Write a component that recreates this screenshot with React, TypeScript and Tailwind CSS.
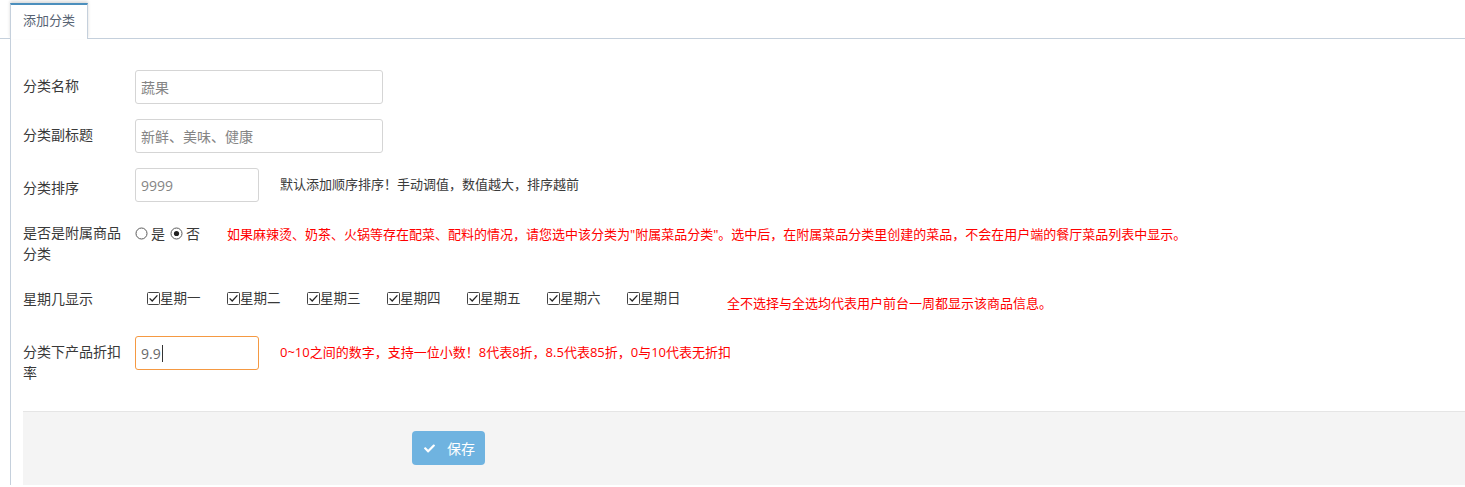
import { FaCheck } from "react-icons/fa";

const weekdays = ["星期一", "星期二", "星期三", "星期四", "星期五", "星期六", "星期日"];

function Label({ children }: { children: React.ReactNode }) {
  return (
    <div className="w-[100px] mr-[12px] shrink-0 pt-[5px] text-[14px] leading-[21px] text-[#393939]">
      {children}
    </div>
  );
}

function Field({ value, width, focused }: { value: string; width: string; focused?: boolean }) {
  return (
    <div
      className={`${width} h-[34px] shrink-0 rounded-[3px] border bg-white pl-[5px] flex items-center text-[14px] ${
        focused ? "border-[#f59942] text-[#696969]" : "border-[#d5d5d5] text-[#858585]"
      }`}
    >
      {value}
      {focused && <span className="ml-px inline-block w-px h-[17px] bg-[#333]" />}
    </div>
  );
}

function Radio({ checked }: { checked?: boolean }) {
  return (
    <svg width="13" height="13" viewBox="0 0 13 13" className="shrink-0">
      <circle cx="6.5" cy="6.5" r="5.5" fill="#fff" stroke="#5a5a5a" strokeWidth="1" />
      {checked && <circle cx="6.5" cy="6.5" r="2.6" fill="#222" />}
    </svg>
  );
}

function CheckBox() {
  return (
    <svg width="13" height="13" viewBox="0 0 13 13" className="shrink-0">
      <rect x="0.5" y="0.5" width="12" height="12" rx="1" fill="#fff" stroke="#444" strokeWidth="1" />
      <polyline points="2.6,6.4 5.2,9 10.4,3.4" fill="none" stroke="#222" strokeWidth="1.3" />
    </svg>
  );
}

export default function App() {
  return (
    <div className="min-h-screen bg-white pt-[3px] font-['Open_Sans','Noto_Sans_CJK_SC',sans-serif] text-[#393939]">
      {/* Tabs */}
      <div className="flex h-[36px] pl-[10px] border-b border-[#c5d0dc]">
        <div className="relative z-10 h-[36px] -mb-px bg-white border-t-2 border-t-[#4c8fbd] border-x border-x-[#c5d0dc] px-[12px] pt-[6px] text-[13px] leading-[18px] text-[#576373] shadow-[0_-2px_3px_0_rgba(0,0,0,0.15)]">
          添加分类
        </div>
      </div>

      {/* Tab content */}
      <div className="ml-[10px] border-l border-[#c5d0dc] pl-[12px] pt-[31px]">
        <div className="flex mb-[15px]">
          <Label>分类名称</Label>
          <Field value="蔬果" width="w-[248px]" />
        </div>

        <div className="flex mb-[15px]">
          <Label>分类副标题</Label>
          <Field value="新鲜、美味、健康" width="w-[248px]" />
        </div>

        <div className="flex items-center mb-[15px]">
          <Label>分类排序</Label>
          <Field value="9999" width="w-[124px]" />
          <span className="ml-[21px] text-[13px] text-[#393939]">默认添加顺序排序！手动调值，数值越大，排序越前</span>
        </div>

        <div className="flex mb-[14px]">
          <Label>是否是附属商品分类</Label>
          <div className="flex items-center gap-[3px] pt-[6px] h-[27px] text-[14px] leading-[21px]">
            <Radio />
            <span className="mr-[2px]">是</span>
            <Radio checked />
            <span>否</span>
          </div>
          <span className="ml-[27px] pt-[7px] text-[13px] leading-[21px] text-[#ff0000]">
            如果麻辣烫、奶茶、火锅等存在配菜、配料的情况，请您选中该分类为"附属菜品分类"。选中后，在附属菜品分类里创建的菜品，不会在用户端的餐厅菜品列表中显示。
          </span>
        </div>

        <div className="flex h-[43px] mb-[15px]">
          <div className="w-[100px] mr-[12px] shrink-0 pt-[10px] text-[14px] leading-[21px]">星期几显示</div>
          <div className="flex pl-[12px] pt-[10px]">
            {weekdays.map((d) => (
              <div key={d} className="w-[80px] flex items-center gap-0 h-[21px] text-[13.5px] leading-[21px]">
                <CheckBox />
                <span>{d}</span>
              </div>
            ))}
          </div>
          <span className="ml-[20px] pt-[15px] text-[13px] leading-[21px] text-[#ff0000]">
            全不选择与全选均代表用户前台一周都显示该商品信息。
          </span>
        </div>

        <div className="flex">
          <Label>分类下产品折扣率</Label>
          <div className="flex items-center h-[34px]">
            <Field value="9.9" width="w-[124px]" focused />
            <span className="ml-[21px] text-[13px] text-[#ff0000]">
              0~10之间的数字，支持一位小数！8代表8折，8.5代表85折，0与10代表无折扣
            </span>
          </div>
        </div>

        {/* Form actions */}
        <div className="mt-[28px] mb-[2px] border-t border-[#e5e5e5] bg-[#f4f4f4] pt-[19px] pb-[20px] pl-[389px]">
          <button className="flex items-center h-[34px] w-[73px] rounded-[4px] bg-[#6fb3e0] pl-[12px] text-[14px] text-white">
            <FaCheck size={11} />
            <span className="ml-[12px]">保存</span>
          </button>
        </div>
      </div>
    </div>
  );
}
